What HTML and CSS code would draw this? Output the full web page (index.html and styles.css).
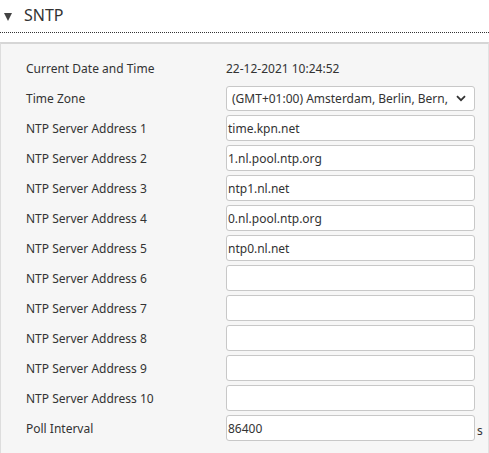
FILE: index.html
```html
<!DOCTYPE html>
<html>
<head>
<meta charset="utf-8">
<link rel="stylesheet" href="styles.css">
</head>
<body>
<div class="header">
  <span class="caret"></span>
  <span class="title">SNTP</span>
</div>
<div class="panel">
  <div class="row"><div class="label">Current Date and Time</div><div class="value">22-12-2021 10:24:52</div></div>
  <div class="row"><div class="label">Time Zone</div>
    <div class="select"><span>(GMT+01:00) Amsterdam, Berlin, Bern,</span>
      <svg class="chev" width="10" height="7" viewBox="0 0 10 7"><path d="M1 1.2 L5 5.2 L9 1.2" fill="none" stroke="#333" stroke-width="1.8"/></svg>
    </div>
  </div>
  <div class="row"><div class="label">NTP Server Address 1</div><div class="input">time.kpn.net</div></div>
  <div class="row"><div class="label">NTP Server Address 2</div><div class="input">1.nl.pool.ntp.org</div></div>
  <div class="row"><div class="label">NTP Server Address 3</div><div class="input">ntp1.nl.net</div></div>
  <div class="row"><div class="label">NTP Server Address 4</div><div class="input">0.nl.pool.ntp.org</div></div>
  <div class="row"><div class="label">NTP Server Address 5</div><div class="input">ntp0.nl.net</div></div>
  <div class="row"><div class="label">NTP Server Address 6</div><div class="input"></div></div>
  <div class="row"><div class="label">NTP Server Address 7</div><div class="input"></div></div>
  <div class="row"><div class="label">NTP Server Address 8</div><div class="input"></div></div>
  <div class="row"><div class="label">NTP Server Address 9</div><div class="input"></div></div>
  <div class="row"><div class="label">NTP Server Address 10</div><div class="input"></div></div>
  <div class="row"><div class="label">Poll Interval</div><div class="input">86400</div><span class="unit">s</span></div>
</div>
</body>
</html>
```
FILE: styles.css
```css
html, body { margin: 0; padding: 0; background: #fff; }
body { font-family: "Noto Sans", "Open Sans", sans-serif; color: #333; font-size: 12px; width: 489px; height: 453px; overflow: hidden; }
.header { height: 33px; border-bottom: 1px dotted #333; box-sizing: border-box; display: flex; align-items: center; padding-left: 4px; }
.caret { width: 0; height: 0; border-left: 4.5px solid transparent; border-right: 4.5px solid transparent; border-top: 8px solid #444; margin-right: 12px; margin-top: 1px; }
.title { font-size: 16px; color: #333; margin-top: -2px; }
.panel { margin-top: 9px; border-top: 2px solid #d6d6d6; border-left: 1px solid #ddd; border-right: 1px solid #e2e2e2; background: #f6f6f6; padding: 9px 0 0 25px; height: 411px; box-sizing: border-box; }
.row { height: 30px; display: flex; align-items: center; }
.label { width: 200px; flex: none; }
.select, .input { width: 249px; height: 26px; box-sizing: border-box; border: 1px solid #c8c8c8; border-radius: 3px; background: #fff; display: flex; align-items: center; }
.input { padding-left: 1px; }
.select { padding-left: 5px; padding-right: 8px; justify-content: space-between; height: 25px; }
.chev { flex: none; }
.unit { margin-left: 2px; margin-top: 4px; }
```
